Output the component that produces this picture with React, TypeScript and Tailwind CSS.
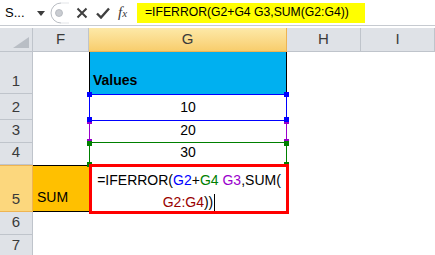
import React from "react";

const hdr = "bg-[#dfe2e7] border-r border-b border-[#bfc4cb] text-[#3a3a3a]";

const rows = [
  { n: "1", h: "h-[42px]" },
  { n: "2", h: "h-[26px]" },
  { n: "3", h: "h-[23px]" },
  { n: "4", h: "h-[22px]" },
  { n: "5", h: "h-[47px]" },
  { n: "6", h: "h-[23px]" },
  { n: "7", h: "h-[23px]" },
];

function FormulaBar() {
  return (
    <div className="h-[26px] flex items-center border-b border-[#c6cad0] bg-white">
      {/* name box */}
      <div className="w-[47px] h-full flex items-center pl-[5px] text-[13px] text-black">
        <span>S...</span>
        <svg width="8" height="5" viewBox="0 0 8 5" className="ml-[12px] mt-[2px]">
          <path d="M0 0 H8 L4 5 Z" fill="#3c3c3c" />
        </svg>
      </div>
      {/* grip */}
      <svg width="22" height="24" viewBox="0 0 22 24" className="shrink-0">
        <path d="M14 2 A10 10 0 0 0 14 22" fill="none" stroke="#b9bdc3" strokeWidth="1" />
        <path d="M14 2 H22 M14 22 H22" stroke="#e3e5e8" strokeWidth="1" />
        <circle cx="12" cy="12" r="3.5" fill="#c9ccd1" stroke="#b0b4ba" strokeWidth="0.8" />
      </svg>
      {/* buttons */}
      <div className="flex items-center w-[66px] h-full">
        <svg width="12" height="12" viewBox="0 0 12 12" className="ml-[7px]">
          <path d="M1.5 1.5 L10.5 10.5 M10.5 1.5 L1.5 10.5" stroke="#3f3f3f" strokeWidth="2" />
        </svg>
        <svg width="14" height="12" viewBox="0 0 14 12" className="ml-[8px]">
          <path d="M1 6.5 L5 10.5 L13 1.5" fill="none" stroke="#3f3f3f" strokeWidth="2.4" />
        </svg>
        <span className="ml-[8px] font-['Liberation_Serif'] italic text-[15px] text-[#3a3a3a] leading-none">
          f<span className="text-[11px]">x</span>
        </span>
      </div>
      <div className="ml-[2px] h-[20px] w-[228px] bg-[#ffff00] flex items-center pl-[8px] text-[12.2px] text-black">
        =IFERROR(G2+G4 G3,SUM(G2:G4))
      </div>
    </div>
  );
}

function Headers() {
  return (
    <div className="flex h-[24px] text-[15px]">
      <div className={`${hdr} w-[33px] relative`}>
        <svg width="16" height="11" viewBox="0 0 16 11" className="absolute right-[3px] bottom-[3px]">
          <path d="M16 0 V11 H0 Z" fill="#b9bec5" />
        </svg>
      </div>
      <div className={`${hdr} w-[56px] flex items-center justify-center`}>F</div>
      <div className="w-[198px] flex items-center justify-center bg-gradient-to-b from-[#fde9a8] to-[#f8cd6c] border-r border-b border-[#eeb452] text-[#3a3a3a]">
        G
      </div>
      <div className={`${hdr} w-[74px] flex items-center justify-center`}>H</div>
      <div className={`${hdr} flex-1 flex items-center justify-center`}>I</div>
    </div>
  );
}

function Cell({ i }: { i: number }) {
  if (i === 0)
    return (
      <div className="w-[198px] bg-[#00b0f0] border-l border-r border-black flex items-end pl-[3px] pb-[3px] font-bold text-black">
        Values
      </div>
    );
  if (i >= 1 && i <= 3)
    return (
      <div className="w-[198px] flex items-end justify-center pb-[2px] text-black">
        {["10", "20", "30"][i - 1]}
      </div>
    );
  return <div className="w-[198px]" />;
}

export default function App() {
  return (
    <div className="w-[435px] h-[255px] overflow-hidden bg-white relative font-['Liberation_Sans',sans-serif]">
      <FormulaBar />
      <div className="h-[2px] bg-white" />
      <Headers />
      <div className="text-[14px]">
        {rows.map((r, i) => (
          <div key={r.n} className={`flex ${r.h}`}>
            <div
              className={`w-[33px] flex items-end justify-center pb-[1px] border-r border-b text-[15px] text-[#3a3a3a] ${
                i === 4
                  ? "bg-[#fcd77d] border-[#eeb452] border-t border-t-[#eeb452]"
                  : "bg-[#dfe2e7] border-[#bfc4cb]"
              }`}
            >
              {r.n}
            </div>
            {i === 4 ? (
              <div className="w-[56px] bg-[#ffc000] border-t border-b border-black flex items-end pl-[4px] pb-[3px] text-black">
                SUM
              </div>
            ) : (
              <div className="w-[56px]" />
            )}
            <Cell i={i} />
            <div className="w-[74px]" />
            <div className="flex-1" />
          </div>
        ))}
      </div>

      {/* reference highlight boxes */}
      <div className="absolute left-[89px] top-[94px] w-[198px] h-[27px] border border-[#0000ff]" />
      <div className="absolute left-[89px] top-[121px] w-[198px] h-[21px] border-l border-r border-[#9900cc]" />
      <div className="absolute left-[89px] top-[142px] w-[198px] h-[24px] border border-[#008000]" />
      {/* handles */}
      <div className="absolute left-[87px] top-[119px] w-[5px] h-[5px] bg-[#9900cc]" />
      <div className="absolute left-[284px] top-[119px] w-[5px] h-[5px] bg-[#9900cc]" />
      <div className="absolute left-[87px] top-[139px] w-[5px] h-[5px] bg-[#9900cc]" />
      <div className="absolute left-[284px] top-[139px] w-[5px] h-[5px] bg-[#9900cc]" />
      <div className="absolute left-[87px] top-[92px] w-[5px] h-[5px] bg-[#0000ff]" />
      <div className="absolute left-[284px] top-[92px] w-[5px] h-[5px] bg-[#0000ff]" />
      <div className="absolute left-[87px] top-[117px] w-[5px] h-[5px] bg-[#0000ff]" />
      <div className="absolute left-[284px] top-[117px] w-[5px] h-[5px] bg-[#0000ff]" />
      <div className="absolute left-[87px] top-[141px] w-[5px] h-[5px] bg-[#008000]" />
      <div className="absolute left-[284px] top-[141px] w-[5px] h-[5px] bg-[#008000]" />
      <div className="absolute left-[87px] top-[162px] w-[5px] h-[5px] bg-[#008000]" />
      <div className="absolute left-[284px] top-[162px] w-[5px] h-[5px] bg-[#008000]" />

      {/* in-cell editor */}
      <div className="absolute left-[89px] top-[164px] w-[200px] h-[50px] border-[3px] border-[#ff0000] bg-white pt-[2px] text-center text-[14px] leading-[22px] text-black">
        <div>
          =IFERROR(<span className="text-[#0000ff]">G2</span>+<span className="text-[#008000]">G4</span>{" "}
          <span className="text-[#9900cc]">G3</span>,SUM(
        </div>
        <div className="flex justify-center items-center">
          <span className="text-[#990000]">G2:G4</span>))
          <span className="inline-block w-px h-[17px] bg-black ml-[1px]" />
        </div>
      </div>
    </div>
  );
}
